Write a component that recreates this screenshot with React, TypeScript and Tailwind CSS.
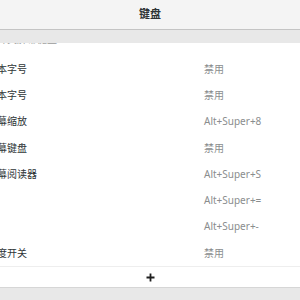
const FONT = "font-['Noto_Sans','Noto_Sans_CJK_SC',sans-serif]"

const ROWS = [
  { label: '本字号', accel: '禁用' },
  { label: '本字号', accel: '禁用' },
  { label: '幕缩放', accel: 'Alt+Super+8' },
  { label: '幕键盘', accel: '禁用' },
  { label: '幕阅读器', accel: 'Alt+Super+S' },
  { label: '', accel: 'Alt+Super+=' },
  { label: '', accel: 'Alt+Super+-' },
  { label: '度开关', accel: '禁用' },
]

export default function App() {
  return (
    <div className={`flex h-[300px] w-[300px] flex-col overflow-hidden bg-white ${FONT}`}>
      <header className="flex h-[30px] shrink-0 items-center justify-center border-b border-[#c4c4c4] bg-[#f4f4f4]">
        <span className="text-[11px] font-bold text-[#2e3436]">键盘</span>
      </header>

      <div className="h-[13px] shrink-0 bg-[#e8e8e8]" />

      <div className="h-[13px] shrink-0 overflow-hidden">
        <div className="-mt-[11px] -ml-[3px] text-[10px] leading-[14px] text-[#9a9a9a]">
          开关屏幕键盘
        </div>
      </div>

      <div className="flex flex-col">
        {ROWS.map((row, i) => (
          <div key={i} className="flex h-[26.3px] items-center text-[10px]">
            <div className="-ml-[3px] w-[207px] shrink-0 text-[#2e3436]">{row.label}</div>
            <div className="text-[#8a8d8e]">{row.accel}</div>
          </div>
        ))}
      </div>

      <div className="flex h-[21px] shrink-0 items-center justify-center border-t border-[#eeeeee]">
        <svg width="9" height="9" viewBox="0 0 9 9">
          <path d="M4.5 0.5v8M0.5 4.5h8" stroke="#1f1f1f" strokeWidth="1.8" />
        </svg>
      </div>

      <div className="flex-1 border-t border-[#d6d6d6] bg-[#e8e8e8]" />
    </div>
  )
}
